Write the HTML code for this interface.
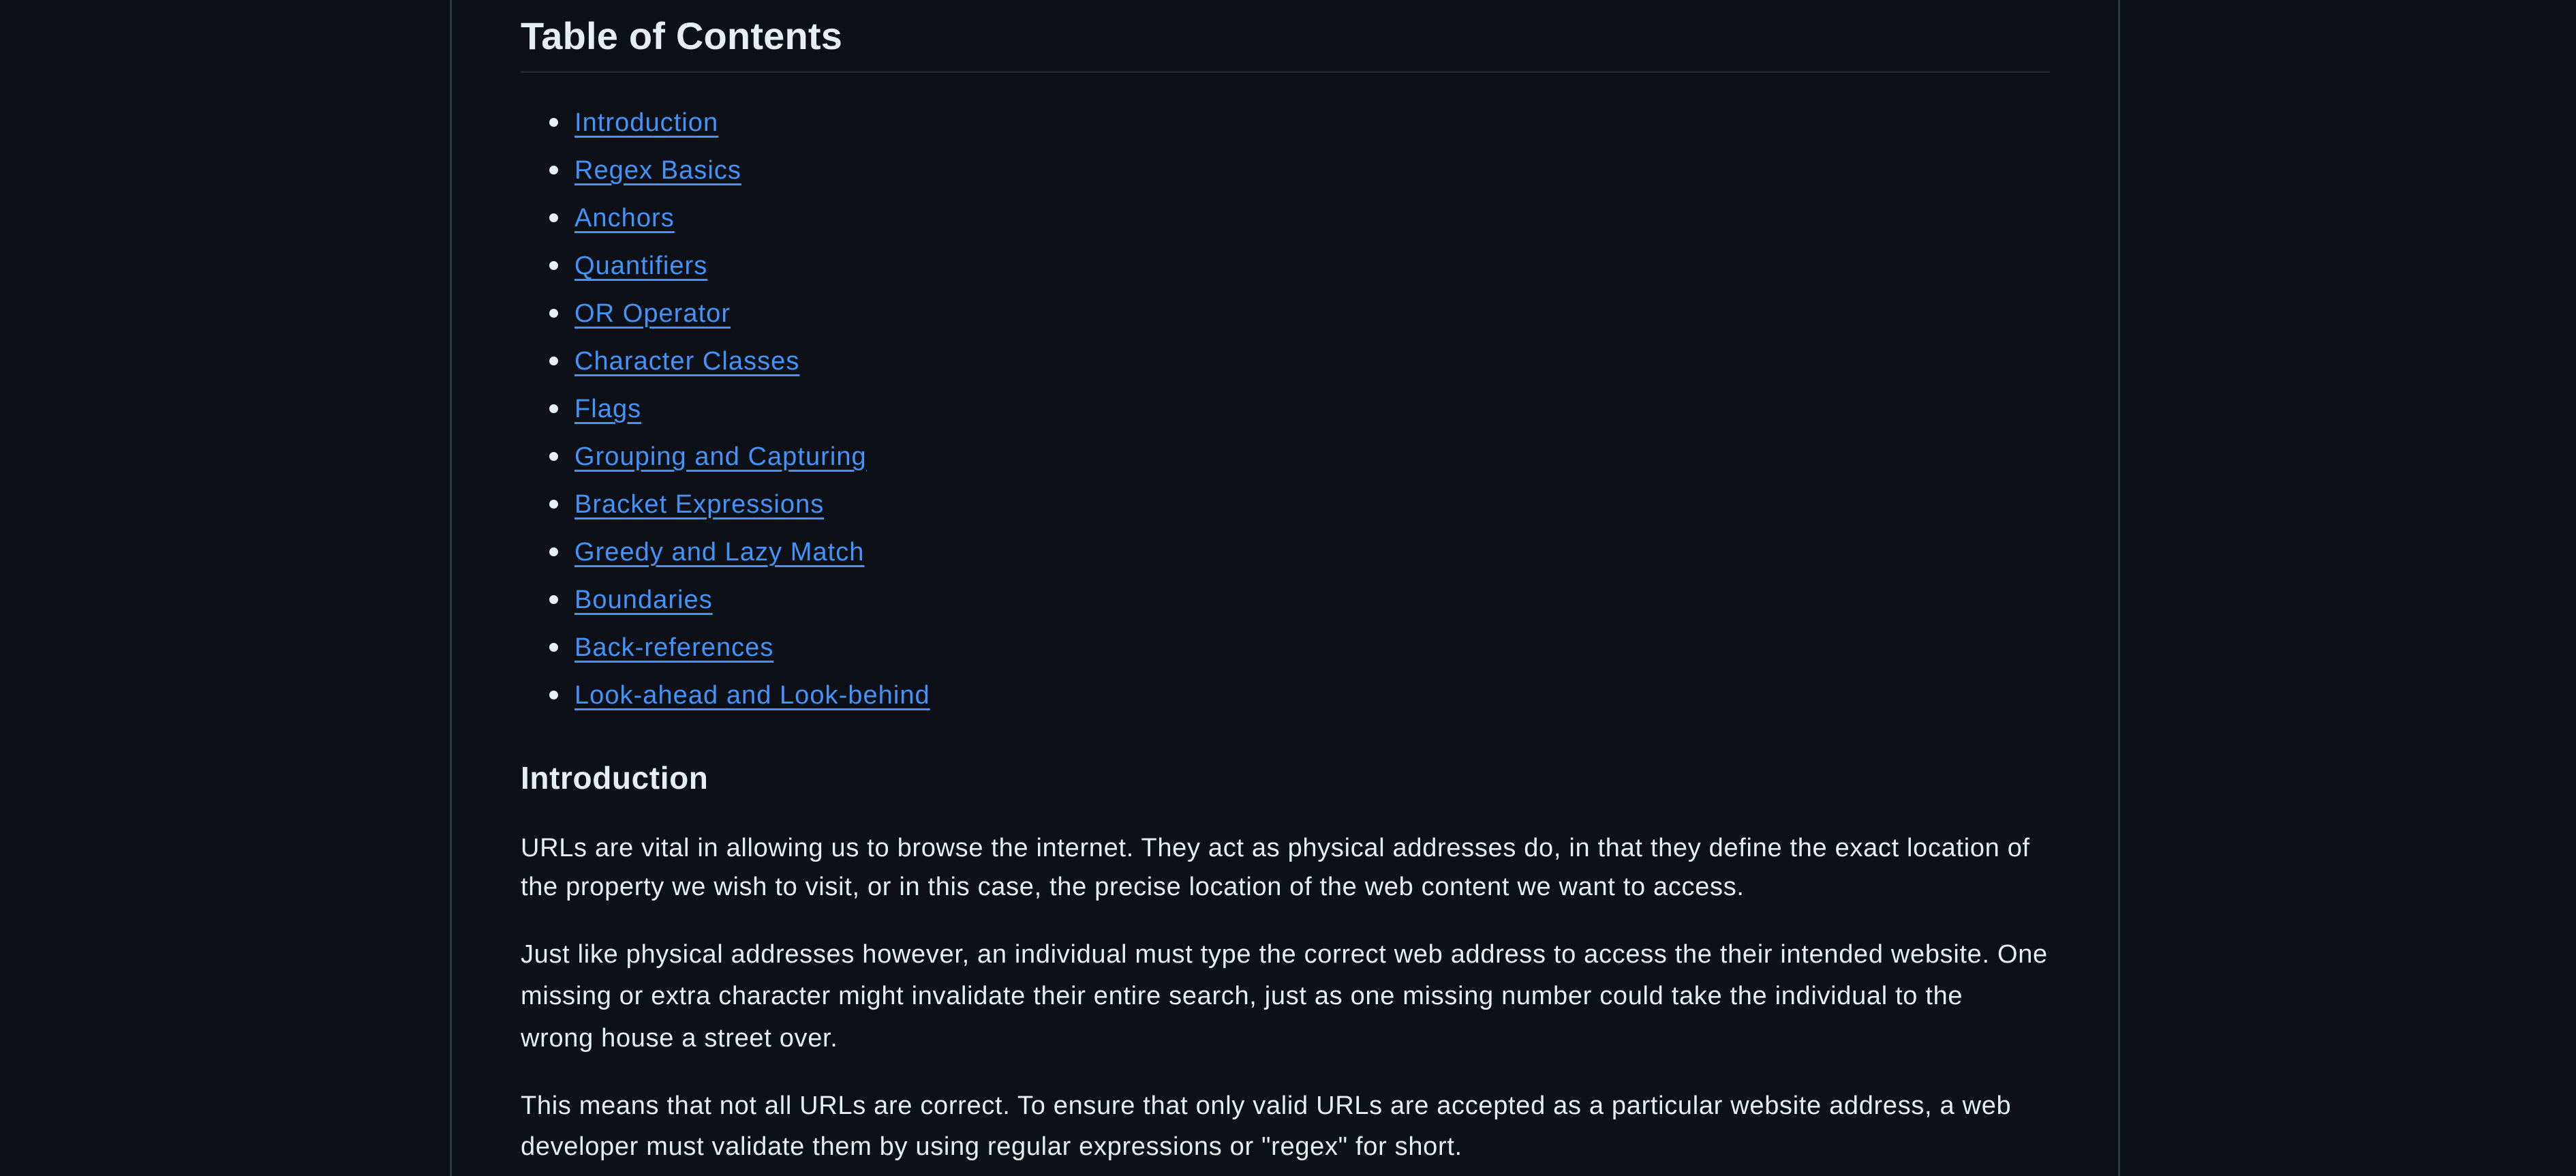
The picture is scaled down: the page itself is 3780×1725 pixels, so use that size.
<!DOCTYPE html>
<html><head><meta charset="utf-8"><style>
html,body{margin:0;padding:0;background:#0d1117;width:3780px;height:1725px;overflow:hidden;}
body{position:relative;font-family:"Liberation Sans",sans-serif;color:#e6edf3;}
.bl{position:absolute;top:0;bottom:0;width:3px;background:#30363d;}
.a{position:absolute;white-space:nowrap;}
h2{position:absolute;margin:0;left:764px;top:18px;font-size:56px;line-height:70px;font-weight:600;letter-spacing:0.2px;}
.hr{position:absolute;left:764px;width:2244px;top:104px;height:3px;background:#21262d;}
.li{position:absolute;left:843px;font-size:38px;line-height:58px;color:#4493f8;text-decoration:underline;text-decoration-thickness:3px;text-underline-offset:7px;letter-spacing:1.05px;}
.dot{position:absolute;left:806px;width:13px;height:13px;border-radius:50%;background:#e6edf3;}
h3{position:absolute;margin:0;left:764px;top:1111px;font-size:46px;line-height:60px;font-weight:600;letter-spacing:0.6px;}
.p{position:absolute;left:764px;font-size:38px;line-height:58px;letter-spacing:0.68px;white-space:nowrap;}
</style></head><body>
<div class="bl" style="left:660px"></div>
<div class="bl" style="left:3108px"></div>
<h2>Table of Contents</h2>
<div class="hr"></div>

<div class="dot" style="top:173px"></div><div class="li a" style="top:151px">Introduction</div>
<div class="dot" style="top:243px"></div><div class="li a" style="top:221px">Regex Basics</div>
<div class="dot" style="top:313px"></div><div class="li a" style="top:291px">Anchors</div>
<div class="dot" style="top:383px"></div><div class="li a" style="top:361px">Quantifiers</div>
<div class="dot" style="top:453px"></div><div class="li a" style="top:431px">OR Operator</div>
<div class="dot" style="top:523px"></div><div class="li a" style="top:501px">Character Classes</div>
<div class="dot" style="top:593px"></div><div class="li a" style="top:571px">Flags</div>
<div class="dot" style="top:663px"></div><div class="li a" style="top:641px">Grouping and Capturing</div>
<div class="dot" style="top:733px"></div><div class="li a" style="top:711px">Bracket Expressions</div>
<div class="dot" style="top:803px"></div><div class="li a" style="top:781px">Greedy and Lazy Match</div>
<div class="dot" style="top:873px"></div><div class="li a" style="top:851px">Boundaries</div>
<div class="dot" style="top:943px"></div><div class="li a" style="top:921px">Back-references</div>
<div class="dot" style="top:1013px"></div><div class="li a" style="top:991px">Look-ahead and Look-behind</div>

<h3>Introduction</h3>
<div class="p" style="top:1215px">URLs are vital in allowing us to browse the internet. They act as physical addresses do, in that they define the exact location of</div>
<div class="p" style="top:1272px">the property we wish to visit, or in this case, the precise location of the web content we want to access.</div>
<div class="p" style="top:1371px">Just like physical addresses however, an individual must type the correct web address to access the their intended website. One</div>
<div class="p" style="top:1432px">missing or extra character might invalidate their entire search, just as one missing number could take the individual to the</div>
<div class="p" style="top:1494px">wrong house a street over.</div>
<div class="p" style="top:1593px">This means that not all URLs are correct. To ensure that only valid URLs are accepted as a particular website address, a web</div>
<div class="p" style="top:1653px">developer must validate them by using regular expressions or "regex" for short.</div>
</body></html>
